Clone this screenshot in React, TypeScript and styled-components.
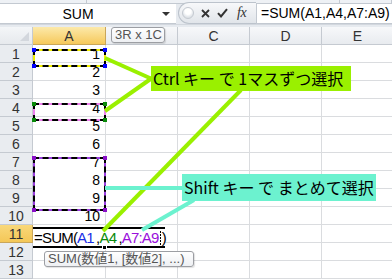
import React from 'react';
import styled, { createGlobalStyle } from 'styled-components';

const Global = createGlobalStyle`
  html, body { margin: 0; padding: 0; background: #fff; overflow: hidden; }
  body { font-family: "Liberation Sans", Arial, sans-serif; }
  * { box-sizing: border-box; }
`;

const Page = styled.div`
  position: relative;
  width: 392px;
  height: 279px;
  overflow: hidden;
  background: #e6eaef;
  display: flex;
  flex-direction: column;
`;

const TopStrip = styled.div`
  height: 7px;
  display: flex;
  background: #eef1f5;
  border-bottom: 1px solid #c3c9d1;
`;

const TopSeg = styled.div<{ $w?: number }>`
  width: ${(p) => (p.$w ? `${p.$w}px` : 'auto')};
  flex: ${(p) => (p.$w ? '0 0 auto' : '1')};
  border-right: 1px solid #c3c9d1;
`;

const FormulaBar = styled.div`
  height: 20px;
  display: flex;
  align-items: stretch;
`;

const NameBox = styled.div`
  width: 176px;
  background: #fff;
  display: flex;
  align-items: center;
  border-bottom: 1px solid #c3c9d1;
`;

const NameText = styled.div`
  width: 156px;
  text-align: center;
  font-size: 14px;
  color: #000;
`;

const DropArrow = styled.div`
  width: 0;
  height: 0;
  margin-left: 6px;
  border-left: 4px solid transparent;
  border-right: 4px solid transparent;
  border-top: 4px solid #333;
`;

const Pill = styled.div`
  width: 78px;
  margin: -2px 0 0 2px;
  height: 22px;
  display: flex;
  align-items: center;
  background: linear-gradient(#f7f8fa, #e1e5ea);
  border: 1px solid #bcc3cc;
  border-right: none;
  border-radius: 11px 0 0 11px;
`;

const Grip = styled.div`
  width: 12px;
  height: 12px;
  margin-left: 3px;
  border-radius: 50%;
  border: 1px solid #c4c9d0;
  background: radial-gradient(circle at 50% 35%, #ffffff 0 35%, #dfe3e8 70%);
`;

const IconSlot = styled.div<{ $ml: number }>`
  margin-left: ${(p) => p.$ml}px;
  display: flex;
  align-items: center;
  color: #3a3a3a;
`;

const Fx = styled.span`
  font-family: "Liberation Serif", "Times New Roman", serif;
  font-style: italic;
  font-size: 14px;
  color: #333;
  letter-spacing: -0.5px;
`;

const FormulaInput = styled.div`
  flex: 1;
  background: #fff;
  border-left: 1px solid #c3c9d1;
  border-bottom: 1px solid #c3c9d1;
  padding-left: 4px;
  font-size: 14px;
  line-height: 19px;
  color: #000;
  white-space: nowrap;
  overflow: hidden;
`;

const Spacer = styled.div`
  height: 4px;
  border-top: 1px solid #d2d7de;
`;

const Sheet = styled.div`
  display: grid;
  grid-template-columns: 33px 73px 72px 72px 72px 72px;
  grid-auto-rows: 18px;
  background: #fff;
`;

const HeaderBase = styled.div<{ $active?: boolean }>`
  display: flex;
  align-items: center;
  justify-content: center;
  font-size: 14px;
  color: #333;
  border-right: 1px solid ${(p) => (p.$active ? '#c9a65a' : '#c5cad1')};
  border-bottom: 1px solid ${(p) => (p.$active ? '#c9a65a' : '#c5cad1')};
`;

const Corner = styled(HeaderBase)`
  position: relative;
  background: linear-gradient(#f4f6f8, #e6e9ed);
  &::after {
    content: '';
    position: absolute;
    right: 3px;
    bottom: 3px;
    width: 0;
    height: 0;
    border-left: 9px solid transparent;
    border-bottom: 9px solid #d3d7dd;
  }
`;

const ColHeader = styled(HeaderBase)`
  background: ${(p) =>
    p.$active ? 'linear-gradient(#fce9aa, #f6c95c)' : 'linear-gradient(#f7f8fa, #e8ebef)'};
`;

const RowHeader = styled(HeaderBase)`
  background: ${(p) => (p.$active ? 'linear-gradient(#f9d87a, #f4c757)' : '#e9ecf0')};
`;

const Cell = styled.div<{ $inBlock?: boolean }>`
  display: flex;
  align-items: center;
  justify-content: flex-end;
  padding: 0 5px;
  font-size: 14px;
  color: #000;
  border-right: 1px solid #dadcdf;
  border-bottom: 1px solid ${(p) => (p.$inBlock ? '#fff' : '#dadcdf')};
`;

const RefBox = styled.div<{ $top: number; $h: number; $gap: string }>`
  position: absolute;
  left: 33px;
  width: 73px;
  top: ${(p) => p.$top}px;
  height: ${(p) => p.$h}px;
  border: 2px solid ${(p) => p.$gap};
  &::after {
    content: '';
    position: absolute;
    inset: -2px;
    border: 2px dashed #000;
  }
`;

const Mark = styled.div<{ $c: string; $pos: string }>`
  position: absolute;
  z-index: 1;
  width: 4px;
  height: 4px;
  background: ${(p) => p.$c};
  ${(p) => p.$pos}
`;

const EditBox = styled.div`
  position: absolute;
  left: 33px;
  top: 227px;
  width: 132px;
  height: 21px;
  background: #fff;
  border-top: 2px solid #000;
  border-bottom: 2px solid #000;
  padding-left: 1px;
  font-size: 15px;
  letter-spacing: -0.8px;
  line-height: 17px;
  white-space: nowrap;
  color: #000;
`;

const Ref = styled.span<{ $c: string }>`
  color: ${(p) => p.$c};
`;

const Caret = styled.span`
  display: inline-block;
  width: 1px;
  height: 14px;
  margin: 0 1px 0 1px;
  vertical-align: -2px;
  background: repeating-linear-gradient(#000 0 2px, transparent 2px 3px);
`;

const FillHandle = styled.div`
  position: absolute;
  left: 102px;
  top: 245px;
  width: 5px;
  height: 5px;
  background: #000;
  border: 1px solid #fff;
`;

const Tip = styled.div<{ $l: number; $t: number; $w: number }>`
  position: absolute;
  left: ${(p) => p.$l}px;
  top: ${(p) => p.$t}px;
  width: ${(p) => p.$w}px;
  height: 16px;
  border: 1px solid #9c9ea3;
  border-radius: 3px;
  background: linear-gradient(#ffffff, #eef0f3);
  box-shadow: 1px 1px 1px rgba(0, 0, 0, 0.12);
  font-family: "Liberation Sans", "Noto Sans CJK JP", sans-serif;
  font-size: 13px;
  line-height: 14px;
  color: #555;
  padding-left: 3px;
  white-space: nowrap;
  overflow: hidden;
`;

const Lines = styled.svg`
  position: absolute;
  left: 0;
  top: 0;
  pointer-events: none;
`;

const Callout = styled.div<{ $l: number; $t: number; $w: number; $h: number; $bg: string }>`
  position: absolute;
  left: ${(p) => p.$l}px;
  top: ${(p) => p.$t}px;
  width: ${(p) => p.$w}px;
  height: ${(p) => p.$h}px;
  background: ${(p) => p.$bg};
  font-family: "Noto Sans CJK JP", "Noto Sans", sans-serif;
  font-size: 16px;
  line-height: ${(p) => p.$h}px;
  color: #000;
  padding-left: 2px;
  white-space: nowrap;
`;

const cols = ['A', 'B', 'C', 'D', 'E'];
const rows = Array.from({ length: 13 }, (_, i) => i + 1);

const LIME = '#9af000';
const TEAL = '#6cf2cf';

type RefDef = { top: number; h: number; gap: string; corner: string };
const refs: RefDef[] = [
  { top: 49, h: 18, gap: '#f2f000', corner: '#0000ff' },
  { top: 103, h: 18, gap: '#ee80ee', corner: '#0a8a0a' },
  { top: 157, h: 54, gap: '#9a3ee0', corner: '#8a10c8' },
];

export default function App() {
  return (
    <>
      <Global />
      <Page>
        <TopStrip>
          <TopSeg $w={87} />
          <TopSeg $w={253} />
          <TopSeg />
        </TopStrip>
        <FormulaBar>
          <NameBox>
            <NameText>SUM</NameText>
            <DropArrow />
          </NameBox>
          <Pill>
            <Grip />
            <IconSlot $ml={7}>
              <svg width="9" height="9" viewBox="0 0 9 9">
                <path d="M1 1L8 8M8 1L1 8" stroke="#333" strokeWidth="1.8" />
              </svg>
            </IconSlot>
            <IconSlot $ml={7}>
              <svg width="11" height="10" viewBox="0 0 11 10">
                <path d="M1 5.2L4 8.5L10 1.2" stroke="#333" strokeWidth="2" fill="none" />
              </svg>
            </IconSlot>
            <IconSlot $ml={9}>
              <Fx>fx</Fx>
            </IconSlot>
          </Pill>
          <FormulaInput>=SUM(A1,A4,A7:A9)</FormulaInput>
        </FormulaBar>
        <Spacer />
        <Sheet>
          <Corner />
          {cols.map((c) => (
            <ColHeader key={c} $active={c === 'A'}>
              {c === 'B' ? '' : c}
            </ColHeader>
          ))}
          {rows.map((r) => (
            <React.Fragment key={r}>
              <RowHeader $active={r === 11}>{r}</RowHeader>
              {cols.map((c) => (
                <Cell key={c} $inBlock={c === 'A' && (r === 7 || r === 8)}>
                  {c === 'A' && r <= 10 ? r : ''}
                </Cell>
              ))}
            </React.Fragment>
          ))}
        </Sheet>

        {refs.map((f, i) => (
          <RefBox key={i} $top={f.top} $h={f.h} $gap={f.gap}>
            <Mark $c={f.corner} $pos="left:-3px; top:-3px;" />
            <Mark $c={f.corner} $pos="right:-3px; top:-3px;" />
            <Mark $c={f.corner} $pos="left:-3px; bottom:-3px;" />
            <Mark $c={f.corner} $pos="right:-3px; bottom:-3px;" />
          </RefBox>
        ))}

        <EditBox>
          =SUM(<Ref $c="#1a2fe6">A1</Ref>{'\u2009'},<Ref $c="#0a8a0a">A4</Ref>{'\u2009'},
          <Ref $c="#9a10dc">A7:A9</Ref>
          <Caret />)
        </EditBox>
        <FillHandle />

        <Tip $l={111} $t={27} $w={54}>3R x 1C</Tip>
        <Tip $l={44} $t={251} $w={150}>SUM(数値1, [数値2], ...)</Tip>

        <Lines width="392" height="279" viewBox="0 0 392 279">
          <g stroke={LIME} strokeWidth="4" strokeLinecap="butt">
            <line x1="105" y1="58" x2="152" y2="79" />
            <line x1="105" y1="111" x2="152" y2="78" />
            <line x1="241" y1="90" x2="103" y2="231" />
          </g>
          <g stroke={TEAL} strokeWidth="4">
            <line x1="105" y1="188" x2="184" y2="188" />
            <line x1="194" y1="200" x2="142" y2="230" />
          </g>
        </Lines>

        <Callout $l={151} $t={66} $w={200} $h={25} $bg={LIME}>
          Ctrl キー で 1マスずつ選択
        </Callout>
        <Callout $l={182} $t={174} $w={194} $h={27} $bg={TEAL}>
          Shift キー で まとめて選択
        </Callout>
      </Page>
    </>
  );
}
